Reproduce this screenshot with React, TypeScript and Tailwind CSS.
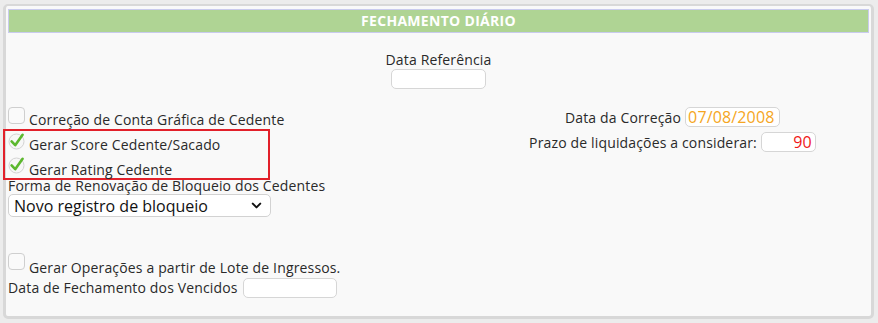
import React from 'react';
import { ChevronDown } from 'lucide-react';

const font = { fontFamily: '"Open Sans", "Liberation Sans", sans-serif' };

const Box = () => (
  <span className="inline-block mt-[2px] w-[17px] h-[17px] rounded-[4px] border border-[#cfcfcf] bg-[#fafafa] mr-[4px] shrink-0" />
);

const Check = () => (
  <svg width="18" height="18" viewBox="0 0 18 18" className="mt-[1px] mr-[3px] shrink-0">
    <circle cx="8.5" cy="9.5" r="7.5" fill="#f7f7f7" stroke="#d3d3d3" strokeWidth="1" />
    <path d="M3.6 9.4 L7.2 13.2 L14.6 2.8" fill="none" stroke="#5cb82e" strokeWidth="2.6" strokeLinecap="round" strokeLinejoin="round" />
  </svg>
);

const TextBox = ({ w, value, color, right }: { w: string; value?: string; color?: string; right?: boolean }) => (
  <div
    className={`${w} h-[20px] rounded-[5px] border border-[#d6d6d6] bg-white px-[2px] text-[16px] leading-[18px] ${right ? 'text-right pr-[3px]' : ''} ${color ?? ''}`}
  >
    {value}
  </div>
);

export default function App() {
  return (
    <div className="w-[878px] h-[323px] bg-[#ececec] pt-[4px] pl-[3px] pr-[4px] text-[14px] tracking-[0.15px] text-[#2a2a2a]" style={font}>
      <div className="h-[315px] rounded-[5px] border-[3px] border-t-[2px] border-[#d8d8d8] bg-[#f9f9f9] px-[2px] pt-[3px]">
        <div className="h-[24px] border border-[#c9cbee] bg-[#afd494] text-center text-white font-bold text-[14px] tracking-[0.3px] leading-[22px]">
          FECHAMENTO DIÁRIO
        </div>

        <div className="flex flex-col items-center mt-[18px]">
          <div className="leading-[18px]">Data Referência</div>
          <TextBox w="w-[95px]" />
        </div>

        <div className="flex mt-[16px]">
          <div className="w-[466px]">
            <div className="flex items-start h-[24px]">
              <Box />
              <span className="mt-[6px] leading-[18px]">Correção de Conta Gráfica de Cedente</span>
            </div>
            <div className="-ml-[5px] w-[267px] h-[51px] border-2 border-[#e2202a] pl-[3px]">
              <div className="flex items-start h-[24px]">
                <Check />
                <span className="mt-[6px] leading-[16px]">Gerar Score Cedente/Sacado</span>
              </div>
              <div className="flex items-start h-[23px]">
                <Check />
                <span className="mt-[8px] leading-[14px]">Gerar Rating Cedente</span>
              </div>
            </div>
            <div className="leading-[14px] mt-[-1px]">Forma de Renovação de Bloqueio dos Cedentes</div>
            <div className="mt-[1px] w-[263px] h-[23px] rounded-[5px] border border-[#d2d2d2] bg-white flex items-center justify-between pl-[5px] pr-[6px] text-[16px] tracking-normal text-[#111]">
              <span>Novo registro de bloqueio</span>
              <ChevronDown size={15} strokeWidth={3.2} color="#111" />
            </div>
            <div className="flex items-start h-[26px] mt-[34px]">
              <Box />
              <span className="mt-[8px] leading-[18px]">Gerar Operações a partir de Lote de Ingressos.</span>
            </div>
            <div className="flex items-center h-[21px]">
              <span className="mr-[5px]">Data de Fechamento dos Vencidos</span>
              <TextBox w="w-[94px]" />
            </div>
          </div>

          <div className="flex-1 flex flex-col items-center pl-[2px] pt-[2px]">
            <div className="flex items-center h-[20px]">
              <span className="mr-[4px]">Data da Correção</span>
              <TextBox w="w-[95px]" value="07/08/2008" color="text-[#f5a623]" />
            </div>
            <div className="flex items-center h-[20px] mt-[5px]">
              <span className="mr-[4px]">Prazo de liquidações a considerar:</span>
              <TextBox w="w-[55px]" value="90" color="text-[#f01818]" right />
            </div>
          </div>
        </div>
      </div>
    </div>
  );
}
